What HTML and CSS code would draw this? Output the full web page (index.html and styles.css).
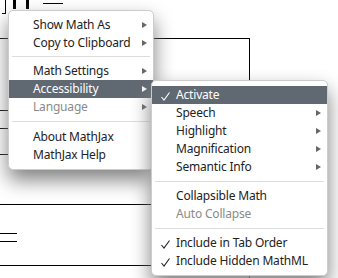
FILE: index.html
```html
<!DOCTYPE html>
<html lang="en">
<head>
  <meta charset="UTF-8">
  <title>MathJax menu</title>
  <link rel="stylesheet" href="styles.css">
</head>
<body>
  <div class="stage">
    <!-- pieces of the typeset math behind the menu -->
    <div class="math">
      <span class="ln bracket"></span>
      <span class="ln bracket-foot"></span>
      <span class="ln stem stem-a"></span>
      <span class="ln stem stem-b"></span>
      <span class="ln top-bar"></span>
      <span class="ln row-top"></span>
      <span class="ln col-right"></span>
      <span class="ln tick tick-a"></span>
      <span class="ln tick tick-b"></span>
      <span class="ln tick tick-c"></span>
      <span class="ln row-mid"></span>
      <span class="ln eq eq-a"></span>
      <span class="ln eq eq-b"></span>
      <span class="ln row-low"></span>
    </div>

    <div class="menu main-menu">
      <div class="item">Show Math As<span class="arrow"></span></div>
      <div class="item">Copy to Clipboard<span class="arrow"></span></div>
      <div class="rule"></div>
      <div class="item">Math Settings<span class="arrow"></span></div>
      <div class="item active">Accessibility<span class="arrow"></span></div>
      <div class="item disabled">Language<span class="arrow"></span></div>
      <div class="rule wide"></div>
      <div class="item">About MathJax</div>
      <div class="item">MathJax Help</div>
    </div>

    <div class="menu sub-menu">
      <div class="item active"><svg class="check" width="9" height="9" viewBox="0 0 9 9"><path d="M0.5 5 L3 8 L8.5 0.5"/></svg>Activate</div>
      <div class="item">Speech<span class="arrow"></span></div>
      <div class="item">Highlight<span class="arrow"></span></div>
      <div class="item">Magnification<span class="arrow"></span></div>
      <div class="item">Semantic Info<span class="arrow"></span></div>
      <div class="rule"></div>
      <div class="item">Collapsible Math</div>
      <div class="item disabled">Auto Collapse</div>
      <div class="rule"></div>
      <div class="item"><svg class="check" width="9" height="9" viewBox="0 0 9 9"><path d="M0.5 5 L3 8 L8.5 0.5"/></svg>Include in Tab Order</div>
      <div class="item"><svg class="check" width="9" height="9" viewBox="0 0 9 9"><path d="M0.5 5 L3 8 L8.5 0.5"/></svg>Include Hidden MathML</div>
    </div>
  </div>
</body>
</html>
```

FILE: styles.css
```css
body {
  margin: 0;
  background: #fff;
  font-family: "Noto Sans", "Open Sans", sans-serif;
  font-size: 12px;
  letter-spacing: -0.18px;
  color: #222;
}
.stage {
  position: relative;
  width: 338px;
  height: 278px;
  overflow: hidden;
}

/* background math fragments */
.ln {
  position: absolute;
  background: #000;
}
.bracket { left: 5px; top: 0; width: 1px; height: 14px; }
.bracket-foot { left: 2px; top: 13px; width: 4px; height: 1px; }
.stem { top: 0; width: 3px; height: 9px; }
.stem-a { left: 13px; }
.stem-b { left: 26px; }
.top-bar { left: 43px; top: 3px; width: 20px; height: 1px; }
.row-top { left: 0; top: 38px; width: 250px; height: 1px; }
.col-right { left: 249px; top: 38px; width: 1px; height: 240px; }
.tick { left: 0; width: 8px; height: 1px; }
.tick-a { top: 110px; }
.tick-b { top: 128px; }
.tick-c { top: 154px; }
.row-mid { left: 0; top: 204px; width: 250px; height: 1px; }
.eq { left: 0; width: 17px; height: 1px; }
.eq-a { top: 233px; }
.eq-b { top: 241px; }
.row-low { left: 0; top: 265px; width: 250px; height: 1px; }

/* context menus */
.menu {
  position: absolute;
  box-sizing: border-box;
  background: #fff;
  border: 1px solid #ccc;
  border-radius: 5px;
  padding: 5px 0;
  box-shadow: 0 10px 20px #808080;
  white-space: nowrap;
}
.main-menu {
  left: 8px;
  top: 10px;
  width: 146px;
}
.sub-menu {
  left: 151px;
  top: 80px;
  width: 177px;
}
.item {
  position: relative;
  padding: 1px 24px;
  line-height: 16px;
}
.item.active {
  background: #606872;
  color: #fff;
}
.item.disabled {
  color: #8a8a8a;
}
.rule {
  border-top: 1px solid #ddd;
  margin: 4px 3px 5px;
}
.rule.wide {
  margin: 5px 3px 6px;
}
.sub-menu .rule {
  margin: 5px 3px;
}
.check {
  position: absolute;
  left: 9px;
  top: 6px;
  fill: none;
  stroke: currentColor;
  stroke-width: 1.1;
}
.arrow {
  position: absolute;
  right: 6px;
  top: 6px;
  width: 0;
  height: 0;
  border-left: 5px solid #666;
  border-top: 3px solid transparent;
  border-bottom: 3px solid transparent;
}
.item.active .arrow {
  border-left-color: #fff;
}
```
